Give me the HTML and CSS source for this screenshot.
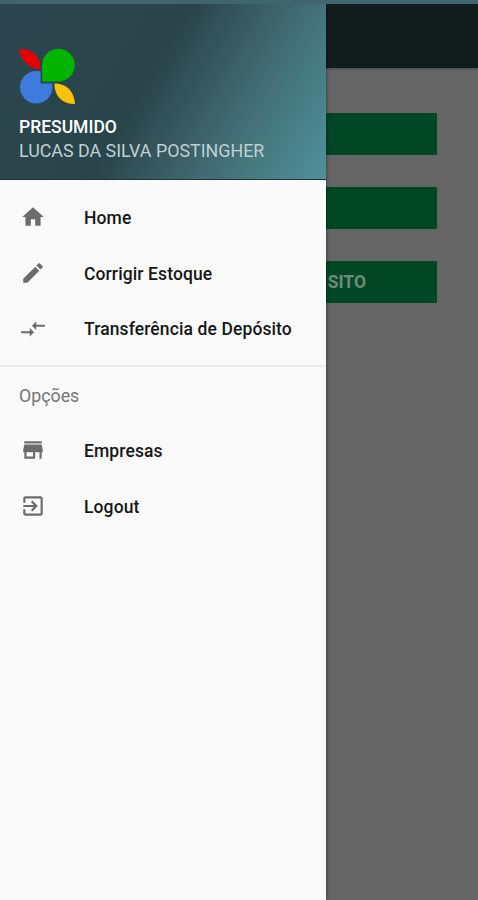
FILE: index.html
```html
<!DOCTYPE html>
<html lang="pt-BR">
<head>
    <meta charset="UTF-8">
    <meta name="viewport" content="width=device-width, initial-scale=1.0">
    <title>Menu</title>
    <link rel="stylesheet" href="styles.css">
</head>
<body>
    <div class="status-bar"></div>

    <div class="screen">
        <header class="toolbar"></header>
        <main class="content">
            <div class="button"></div>
            <div class="button"></div>
            <div class="button">SITO</div>
        </main>

        <aside class="drawer">
            <div class="drawer-header">
                <svg class="logo" viewBox="0 0 58 58">
                    <circle cx="17.5" cy="40" r="16.5" fill="#3f7bdc"/>
                    <path d="M0 1C12 0 23 8 21.500 22C10 20 2 14 0 1Z" fill="#e60000"/>
                    <path d="M22 36V17.500A17.400 17.400 0 1 1 39.500 35V36Z" fill="#2a444c"/>
                    <path d="M23.500 34V17.500A16.600 16.600 0 1 1 40 34Z" fill="#00b400"/>
                    <path d="M36 36C49 36 56 44 57 57C44 57 36 49 36 36Z" fill="#ffc107"/>
                </svg>
                <div class="company">PRESUMIDO</div>
                <div class="user">LUCAS DA SILVA POSTINGHER</div>
            </div>

            <nav class="menu">
                <a class="item">
                    <svg class="icon" viewBox="0 0 24 24"><path d="M10 20v-6h4v6h5v-8h3L12 3 2 12h3v8z"/></svg>
                    <span>Home</span>
                </a>
                <a class="item">
                    <svg class="icon" viewBox="0 0 24 24"><path d="M3 17.250V21h3.750L17.810 9.940l-3.750-3.750L3 17.250zM20.710 7.040c.39-.39.39-1.020 0-1.410l-2.340-2.340c-.39-.39-1.020-.39-1.410 0l-1.830 1.830 3.750 3.750 1.830-1.830z"/></svg>
                    <span>Corrigir Estoque</span>
                </a>
                <a class="item">
                    <svg class="icon" viewBox="0 0 24 24"><path d="M9.010 14H1v2h8.010v3L13 15l-3.990-4v3zm5.980-1v-3H23V8h-8.010V5L11 9l3.990 4z"/></svg>
                    <span>Transferência de Depósito</span>
                </a>
            </nav>

            <nav class="menu options">
                <div class="label">Opções</div>
                <a class="item">
                    <svg class="icon" viewBox="0 0 24 24"><path d="M20 4H4v2h16V4zm1 10v-2l-1-5H4l-1 5v2h1v6h10v-6h4v6h2v-6h1zm-9 4H6v-4h6v4z"/></svg>
                    <span>Empresas</span>
                </a>
                <a class="item">
                    <svg class="icon" viewBox="0 0 24 24"><path d="M10.090 15.590L11.500 17l5-5-5-5-1.410 1.410L12.670 11H3v2h9.670l-2.580 2.590zM19 3H5c-1.110 0-2 .9-2 2v4h2V5h14v14H5v-4H3v4c0 1.100.89 2 2 2h14c1.100 0 2-.9 2-2V5c0-1.100-.9-2-2-2z"/></svg>
                    <span>Logout</span>
                </a>
            </nav>
        </aside>
    </div>
</body>
</html>
```

FILE: styles.css
```css
* {
    box-sizing: border-box;
}

body {
    margin: 0;
    height: 100vh;
    display: flex;
    flex-direction: column;
    overflow: hidden;
    font-family: Roboto, sans-serif;
    background: #656565;
}

.status-bar {
    height: 4px;
    background: #40656d;
}

.screen {
    position: relative;
    flex: 1;
    overflow: hidden;
}

.toolbar {
    height: 64px;
    background: #111d1d;
    box-shadow: 0 1px 2px rgba(0, 0, 0, 0.3);
}

.content {
    display: flex;
    flex-direction: column;
    gap: 32px;
    padding: 45px 41px;
}

.button {
    height: 42px;
    display: flex;
    align-items: center;
    justify-content: flex-end;
    padding-right: 71px;
    border-radius: 1px;
    background: #004726;
    color: #6d8d78;
    font-size: 17.5px;
    font-weight: 700;
}

/* drawer */
.drawer {
    position: absolute;
    top: 0;
    bottom: 0;
    left: 0;
    width: 326px;
    background: #fafafa;
    box-shadow: 0 0 4px rgba(0, 0, 0, 0.5);
}

.drawer-header {
    height: 176px;
    padding: 44px 19px 0;
    border-bottom: 1px solid #20343a;
    background: linear-gradient(120deg, #2c464f 0%, #2a444b 45%, #40686f 69%, #457a7f 81%, #50909b 100%);
    color: #fff;
}

.logo {
    display: block;
    width: 57px;
    height: 57px;
}

.company {
    margin-top: 10px;
    font-size: 17.5px;
    line-height: 24px;
    font-weight: 500;
}

.user {
    font-size: 17.85px;
    line-height: 24px;
    color: #bfd0d4;
    white-space: nowrap;
}

.menu {
    padding: 10px 0 8px;
}

.item {
    height: 55.7px;
    display: flex;
    align-items: center;
    padding-left: 20px;
    color: #161616;
    font-size: 17.5px;
    font-weight: 500;
    letter-spacing: 0.11px;
    white-space: nowrap;
}

.icon {
    width: 26px;
    height: 26px;
    margin-right: 38px;
    margin-top: -1px;
    fill: #6c6c6c;
}

.options {
    padding-top: 0;
    border-top: 2px solid #ececec;
}

.label {
    height: 56px;
    padding-left: 19px;
    line-height: 57px;
    color: #747474;
    font-size: 17.8px;
}
```
